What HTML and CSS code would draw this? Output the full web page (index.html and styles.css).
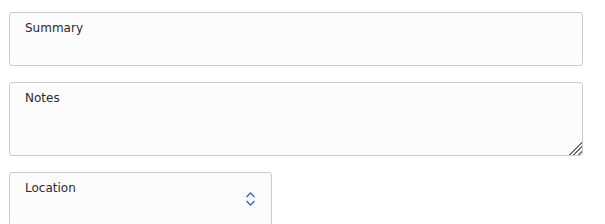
FILE: index.html
```html
<!DOCTYPE html>
<html>
<head>
  <meta charset="utf-8">
  <meta name="viewport" content="width=device-width">
  <title>Event form</title>
  <link rel="stylesheet" href="styles.css">
</head>
<body>
  <section class="wrapper">
    <div class="field field_summary">
      <label class="fieldLabel">Summary</label>
    </div>
    <div class="field field_notes">
      <label class="fieldLabel">Notes</label>
      <span class="grip"></span>
    </div>
    <div class="field field_location">
      <label class="fieldLabel">Location</label>
      <svg class="chevrons" width="11" height="16" viewBox="0 0 11 16">
        <path d="M1.5 6 L5.5 2 L9.5 6" fill="none" stroke="#3567c9" stroke-width="1.4"/>
        <path d="M1.5 10 L5.5 14 L9.5 10" fill="none" stroke="#3567c9" stroke-width="1.4"/>
      </svg>
    </div>
  </section>
</body>
</html>
```

FILE: styles.css
```css
body {
  margin: 0;
  background-color: #ffffff;
  font-family: "DejaVu Sans", sans-serif;
}

.wrapper {
  box-sizing: border-box;
  display: flex;
  flex-direction: column;
  align-items: flex-start;
  gap: 16px;
  padding: 12px 0px 0px 9px;
}

.field {
  position: relative;
  box-sizing: border-box;
  display: flex;
  flex-direction: row;
  align-items: flex-start;
  width: 574px;
  height: 54px;
  padding: 8px 14px;
  background-color: #fcfcfd;
  border: 1px solid #c9ccd1;
  border-radius: 3px;
  flex-shrink: 0;
}

.field_notes {
  height: 74px;
}

.field_location {
  width: 263px;
  align-items: center;
  justify-content: space-between;
  padding-right: 15px;
}

.fieldLabel {
  font-size: 12px;
  line-height: 14px;
  color: #2a2a2a;
  padding-left: 1px;
  align-self: flex-start;
}

.chevrons {
  display: block;
}

.grip {
  position: absolute;
  right: 0px;
  bottom: 0px;
  width: 15px;
  height: 15px;
  background-image: repeating-linear-gradient(135deg, transparent 0px, transparent 2px, #707070 2px, #707070 3.2px);
  clip-path: polygon(100% 0, 100% 100%, 0 100%);
}
```
